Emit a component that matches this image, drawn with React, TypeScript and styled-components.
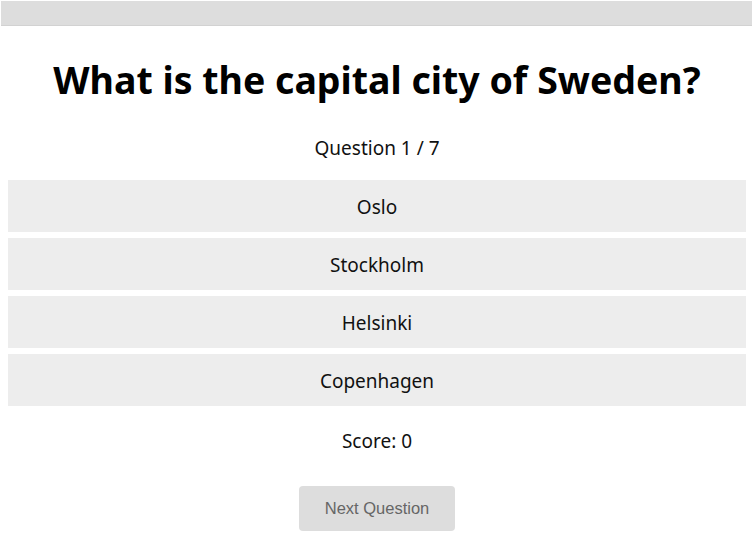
import React from "react";
import styled, { createGlobalStyle } from "styled-components";

const GlobalStyle = createGlobalStyle`
  html, body {
    margin: 0;
    padding: 0;
    background: #ffffff;
  }
  body {
    font-family: "Noto Sans", "Open Sans", sans-serif;
    color: #111;
  }
`;

const ProgressTrack = styled.div`
  margin: 1px 2px 0 1px;
  height: 24px;
  background: #dddddd;
  border-bottom: 1px solid #d2d2d2;
`;

const Main = styled.main`
  display: flex;
  flex-direction: column;
  align-items: stretch;
  padding: 0 8px;
`;

const Title = styled.h1`
  margin: 30px 0 0;
  font-size: 37.5px;
  line-height: 48px;
  font-weight: 700;
  text-align: center;
  color: #000;
`;

const Caption = styled.p<{ $gap: number }>`
  margin: ${(p) => p.$gap}px 0 0;
  font-size: 19px;
  line-height: 24px;
  text-align: center;
  color: #111;
`;

const Options = styled.div`
  display: flex;
  flex-direction: column;
  gap: 6px;
  margin-top: 20px;
`;

const Option = styled.button`
  display: flex;
  align-items: center;
  justify-content: center;
  height: 52px;
  border: none;
  background: #ededed;
  font-family: "Noto Sans", "Open Sans", sans-serif;
  font-size: 19px;
  color: #111;
  cursor: pointer;
  padding: 2px 0 0;
`;

const NextButton = styled.button`
  align-self: center;
  margin-top: 33px;
  width: 156px;
  height: 45px;
  padding: 0 0 1px;
  border: none;
  border-radius: 4px;
  background: #dddddd;
  color: #666;
  font-family: "Liberation Sans", Arial, sans-serif;
  font-size: 16.5px;
`;

const answers = ["Oslo", "Stockholm", "Helsinki", "Copenhagen"];

export default function App() {
  return (
    <>
      <GlobalStyle />
      <ProgressTrack />
      <Main>
        <Title>What is the capital city of Sweden?</Title>
        <Caption $gap={32}>Question 1 / 7</Caption>
        <Options>
          {answers.map((a) => (
            <Option key={a}>{a}</Option>
          ))}
        </Options>
        <Caption $gap={23}>Score: 0</Caption>
        <NextButton disabled>Next Question</NextButton>
      </Main>
    </>
  );
}
